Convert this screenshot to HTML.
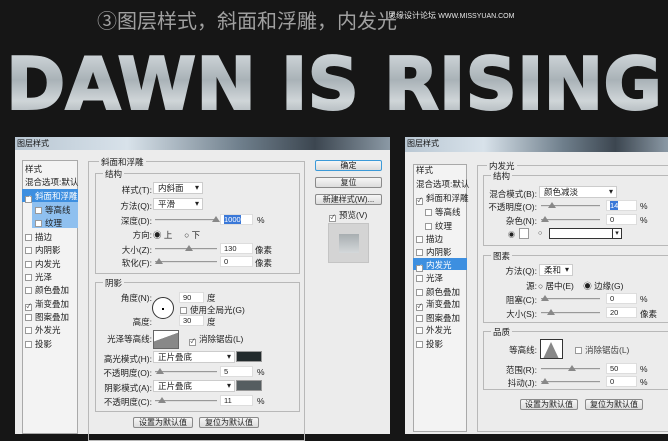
<!DOCTYPE html>
<html><head><meta charset="utf-8"><style>
*{margin:0;padding:0;box-sizing:border-box}
body{width:668px;height:434px;background:#161616;position:relative;overflow:hidden;font-family:"Liberation Sans","Noto Sans CJK SC",sans-serif;font-size:8.5px;color:#222}
.a{position:absolute;white-space:nowrap}
.dlg{position:absolute;background:#ececec}
.tb{position:absolute;background:linear-gradient(90deg,#b9c7d3,#d8e2ea 30%,#6f7f8c 60%,#3c4650 80%,#8b99a5);font-size:8px;color:#111;padding:1px 2px}
.box{position:absolute;border:1px solid #b8b8b8}
.lbl{position:absolute;background:#ececec;padding:0 2px;font-size:8.5px}
.list{position:absolute;background:#f3f3f3;border:1px solid #a9a9a9}
.it{position:absolute;left:2px;font-size:8.5px}
.cb{display:inline-block;width:7px;height:7px;border:1px solid #999;background:#fff;margin-right:3px;vertical-align:-1px;font-size:6px;line-height:5px;text-align:center}
.inp{position:absolute;height:11px;background:#fff;border:1px solid #ddd;font-size:7.5px;padding-left:3px;line-height:9px}
.dd{position:absolute;height:12px;background:#fff;border:1px solid #ccc;font-size:8.5px;padding-left:4px;line-height:10px}
.dd:after{content:"▾";position:absolute;right:3px;top:0;font-size:8px}
.sl{position:absolute;height:2px;background:#999;border-bottom:1px solid #ddd}
.th{position:absolute;top:-3px;width:0;height:0;border-left:4px solid transparent;border-right:4px solid transparent;border-bottom:6px solid #888}
.btn{position:absolute;height:11px;border:1px solid #8a8a8a;border-radius:2px;background:linear-gradient(#f6f6f6,#dcdcdc);text-align:center;font-size:8px;line-height:9px}
.r{text-align:right}
</style></head><body>
<div class="a" style="left:97px;top:5px;font-size:20px;color:#a0a0a0">③图层样式，斜面和浮雕，内发光</div>
<div class="a" style="left:388px;top:10px;font-size:8px;color:#e8e8e8">思缘设计论坛 <span style="font-size:7px">WWW.MISSYUAN.COM</span></div>
<svg class="a" style="left:0;top:48px" width="668" height="70">
<defs><linearGradient id="g" x1="0" y1="0" x2="0" y2="1"><stop offset="0" stop-color="#dfe4e7"/><stop offset=".45" stop-color="#a9b2b7"/><stop offset=".7" stop-color="#cfd5d8"/><stop offset="1" stop-color="#98a1a6"/></linearGradient></defs>
<text x="6" y="61" textLength="656" lengthAdjust="spacingAndGlyphs" font-family="DejaVu Sans" font-weight="bold" font-size="72" fill="url(#g)" stroke="url(#g)" stroke-width="2">DAWN IS RISING</text>
</svg>

<!-- left dialog -->
<div class="tb" style="left:15px;top:137px;width:375px;height:13px">图层样式</div>
<div class="dlg" style="left:15px;top:150px;width:375px;height:284px"></div>
<div class="list" style="left:22px;top:160px;width:56px;height:274px"></div>
<div class="a" style="left:22px;top:189px;width:56px;height:13px;background:#3d8fe0"></div>
<div class="a" style="left:32px;top:202px;width:46px;height:26px;background:#8fc0ef"></div>
<div class="it" style="left:25px;top:163px">样式</div>
<div class="it" style="left:25px;top:176px">混合选项:默认</div>
<div class="it" style="left:25px;top:190px;color:#fff"><span class="cb">✓</span>斜面和浮雕</div>
<div class="it" style="left:35px;top:204px"><span class="cb"></span>等高线</div>
<div class="it" style="left:35px;top:217px"><span class="cb"></span>纹理</div>
<div class="it" style="left:25px;top:231px"><span class="cb"></span>描边</div>
<div class="it" style="left:25px;top:244px"><span class="cb"></span>内阴影</div>
<div class="it" style="left:25px;top:258px"><span class="cb"></span>内发光</div>
<div class="it" style="left:25px;top:271px"><span class="cb"></span>光泽</div>
<div class="it" style="left:25px;top:284px"><span class="cb"></span>颜色叠加</div>
<div class="it" style="left:25px;top:298px"><span class="cb">✓</span>渐变叠加</div>
<div class="it" style="left:25px;top:311px"><span class="cb"></span>图案叠加</div>
<div class="it" style="left:25px;top:324px"><span class="cb"></span>外发光</div>
<div class="it" style="left:25px;top:338px"><span class="cb"></span>投影</div>

<div class="box" style="left:88px;top:161px;width:217px;height:280px"></div>
<div class="lbl" style="left:99px;top:156px">斜面和浮雕</div>
<div class="box" style="left:95px;top:173px;width:205px;height:101px"></div>
<div class="lbl" style="left:103px;top:168px">结构</div>
<div class="a r" style="left:100px;width:52px;top:184px">样式(T):</div><div class="dd" style="left:153px;top:182px;width:50px">内斜面</div>
<div class="a r" style="left:100px;width:52px;top:200px">方法(Q):</div><div class="dd" style="left:153px;top:198px;width:50px">平滑</div>
<div class="a r" style="left:100px;width:52px;top:215px">深度(D):</div><div class="sl" style="left:155px;top:219px;width:62px"><div class="th" style="left:57px"></div></div><div class="inp" style="left:220px;top:214px;width:33px"><span style="background:#3a78d8;color:#fff">1000</span></div><div class="a" style="left:257px;top:215px">%</div>
<div class="a r" style="left:100px;width:52px;top:229px">方向:</div><div class="a" style="left:153px;top:229px">◉ 上 &nbsp;&nbsp;&nbsp;&nbsp;○ 下</div>
<div class="a r" style="left:100px;width:52px;top:244px">大小(Z):</div><div class="sl" style="left:155px;top:248px;width:62px"><div class="th" style="left:30px"></div></div><div class="inp" style="left:220px;top:243px;width:33px">130</div><div class="a" style="left:255px;top:244px">像素</div>
<div class="a r" style="left:100px;width:52px;top:257px">软化(F):</div><div class="sl" style="left:155px;top:261px;width:62px"><div class="th" style="left:0"></div></div><div class="inp" style="left:220px;top:256px;width:33px">0</div><div class="a" style="left:255px;top:257px">像素</div>

<div class="box" style="left:95px;top:282px;width:205px;height:130px"></div>
<div class="lbl" style="left:103px;top:277px">阴影</div>
<div class="a r" style="left:100px;width:52px;top:292px">角度(N):</div>
<div class="a" style="left:152px;top:297px;width:22px;height:22px;border:1px solid #333;border-radius:50%;background:#fff"><div class="a" style="left:9px;top:10px;width:2px;height:2px;background:#000"></div></div>
<div class="inp" style="left:179px;top:292px;width:25px">90</div><div class="a" style="left:207px;top:292px">度</div>
<div class="a" style="left:180px;top:304px"><span class="cb"></span>使用全局光(G)</div>
<div class="a r" style="left:100px;width:52px;top:316px">高度:</div><div class="inp" style="left:179px;top:315px;width:25px">30</div><div class="a" style="left:207px;top:316px">度</div>
<div class="a r" style="left:90px;width:62px;top:333px">光泽等高线:</div>
<div class="a" style="left:153px;top:330px;width:26px;height:19px;border:1px solid #666;background:linear-gradient(160deg,#fff 40%,#888 41%)"></div>
<div class="a" style="left:189px;top:333px"><span class="cb">✓</span>消除锯齿(L)</div>
<div class="a r" style="left:100px;width:52px;top:353px">高光模式(H):</div><div class="dd" style="left:153px;top:351px;width:82px">正片叠底</div><div class="a" style="left:236px;top:351px;width:26px;height:11px;background:#222a2c;border:1px solid #999"></div>
<div class="a r" style="left:100px;width:52px;top:367px">不透明度(O):</div><div class="sl" style="left:155px;top:371px;width:62px"><div class="th" style="left:1px"></div></div><div class="inp" style="left:220px;top:366px;width:33px">5</div><div class="a" style="left:257px;top:367px">%</div>
<div class="a r" style="left:100px;width:52px;top:382px">阴影模式(A):</div><div class="dd" style="left:153px;top:380px;width:82px">正片叠底</div><div class="a" style="left:236px;top:380px;width:26px;height:11px;background:#555d60;border:1px solid #999"></div>
<div class="a r" style="left:100px;width:52px;top:396px">不透明度(C):</div><div class="sl" style="left:155px;top:400px;width:62px"><div class="th" style="left:3px"></div></div><div class="inp" style="left:220px;top:395px;width:33px">11</div><div class="a" style="left:257px;top:396px">%</div>
<div class="btn" style="left:133px;top:417px;width:60px">设置为默认值</div>
<div class="btn" style="left:199px;top:417px;width:60px">复位为默认值</div>

<div class="btn" style="left:315px;top:160px;width:67px;border-color:#3c9ad8">确定</div>
<div class="btn" style="left:315px;top:177px;width:67px">复位</div>
<div class="btn" style="left:315px;top:194px;width:67px">新建样式(W)...</div>
<div class="a" style="left:329px;top:209px"><span class="cb">✓</span>预览(V)</div>
<div class="a" style="left:328px;top:223px;width:41px;height:40px;background:#d4d4d4;border:1px solid #c4c4c4"><div class="a" style="left:10px;top:10px;width:20px;height:19px;background:linear-gradient(#a8aeb1,#d4d8da)"></div></div>

<!-- right dialog -->
<div class="tb" style="left:405px;top:137px;width:263px;height:15px">图层样式</div>
<div class="dlg" style="left:405px;top:152px;width:263px;height:282px"></div>
<div class="list" style="left:413px;top:164px;width:54px;height:268px"></div>
<div class="a" style="left:413px;top:258px;width:54px;height:12px;background:#3d8fe0"></div>
<div class="it" style="left:416px;top:164px">样式</div>
<div class="it" style="left:416px;top:178px">混合选项:默认</div>
<div class="it" style="left:416px;top:192px"><span class="cb">✓</span>斜面和浮雕</div>
<div class="it" style="left:425px;top:206px"><span class="cb"></span>等高线</div>
<div class="it" style="left:425px;top:220px"><span class="cb"></span>纹理</div>
<div class="it" style="left:416px;top:233px"><span class="cb"></span>描边</div>
<div class="it" style="left:416px;top:246px"><span class="cb"></span>内阴影</div>
<div class="it" style="left:416px;top:259px;color:#fff"><span class="cb">✓</span>内发光</div>
<div class="it" style="left:416px;top:272px"><span class="cb"></span>光泽</div>
<div class="it" style="left:416px;top:286px"><span class="cb"></span>颜色叠加</div>
<div class="it" style="left:416px;top:298px"><span class="cb">✓</span>渐变叠加</div>
<div class="it" style="left:416px;top:312px"><span class="cb"></span>图案叠加</div>
<div class="it" style="left:416px;top:324px"><span class="cb"></span>外发光</div>
<div class="it" style="left:416px;top:338px"><span class="cb"></span>投影</div>

<div class="box" style="left:477px;top:165px;width:200px;height:267px"></div>
<div class="lbl" style="left:487px;top:160px">内发光</div>
<div class="box" style="left:483px;top:175px;width:190px;height:71px"></div>
<div class="lbl" style="left:491px;top:170px">结构</div>
<div class="a r" style="left:480px;width:57px;top:188px">混合模式(B):</div><div class="dd" style="left:539px;top:186px;width:78px">颜色减淡</div>
<div class="a r" style="left:480px;width:57px;top:201px">不透明度(O):</div><div class="sl" style="left:541px;top:205px;width:59px"><div class="th" style="left:7px"></div></div><div class="inp" style="left:606px;top:200px;width:31px"><span style="background:#3a78d8;color:#fff">14</span></div><div class="a" style="left:640px;top:201px">%</div>
<div class="a r" style="left:480px;width:57px;top:215px">杂色(N):</div><div class="sl" style="left:541px;top:219px;width:59px"><div class="th" style="left:0"></div></div><div class="inp" style="left:606px;top:214px;width:31px">0</div><div class="a" style="left:640px;top:215px">%</div>
<div class="a" style="left:508px;top:230px;font-size:7px">◉</div><div class="a" style="left:519px;top:228px;width:10px;height:11px;background:#fff;border:1px solid #999"></div>
<div class="a" style="left:538px;top:230px;font-size:7px">○</div><div class="a" style="left:549px;top:228px;width:73px;height:11px;background:#fff;border:1px solid #333"><div class="a" style="right:0;top:0;width:9px;height:9px;border-left:1px solid #333;font-size:7px;text-align:center;line-height:9px">▾</div></div>
<div class="box" style="left:483px;top:255px;width:190px;height:68px"></div>
<div class="lbl" style="left:491px;top:250px">图素</div>
<div class="a r" style="left:480px;width:57px;top:265px">方法(Q):</div><div class="dd" style="left:539px;top:264px;width:34px">柔和</div>
<div class="a r" style="left:480px;width:57px;top:280px">源:</div><div class="a" style="left:538px;top:280px">○ 居中(E) &nbsp;&nbsp;&nbsp;◉ 边缘(G)</div>
<div class="a r" style="left:480px;width:57px;top:294px">阻塞(C):</div><div class="sl" style="left:541px;top:298px;width:59px"><div class="th" style="left:0"></div></div><div class="inp" style="left:606px;top:293px;width:31px">0</div><div class="a" style="left:640px;top:294px">%</div>
<div class="a r" style="left:480px;width:57px;top:308px">大小(S):</div><div class="sl" style="left:541px;top:312px;width:59px"><div class="th" style="left:6px"></div></div><div class="inp" style="left:606px;top:307px;width:31px">20</div><div class="a" style="left:640px;top:308px">像素</div>
<div class="box" style="left:483px;top:331px;width:190px;height:59px"></div>
<div class="lbl" style="left:491px;top:326px">品质</div>
<div class="a r" style="left:480px;width:57px;top:344px">等高线:</div>
<div class="a" style="left:540px;top:339px;width:23px;height:20px;border:1px solid #333;background:#fff;overflow:hidden"><div class="a" style="left:2px;top:2px;width:0;height:0;border-left:8px solid transparent;border-right:8px solid transparent;border-bottom:17px solid #888"></div></div>
<div class="a" style="left:575px;top:344px;color:#444"><span class="cb"></span>消除锯齿(L)</div>
<div class="a r" style="left:480px;width:57px;top:364px">范围(R):</div><div class="sl" style="left:541px;top:368px;width:59px"><div class="th" style="left:27px"></div></div><div class="inp" style="left:606px;top:363px;width:31px">50</div><div class="a" style="left:640px;top:364px">%</div>
<div class="a r" style="left:480px;width:57px;top:377px">抖动(J):</div><div class="sl" style="left:541px;top:381px;width:59px"><div class="th" style="left:0"></div></div><div class="inp" style="left:606px;top:376px;width:31px">0</div><div class="a" style="left:640px;top:377px">%</div>
<div class="btn" style="left:520px;top:399px;width:58px">设置为默认值</div>
<div class="btn" style="left:585px;top:399px;width:58px">复位为默认值</div>
</body></html>
